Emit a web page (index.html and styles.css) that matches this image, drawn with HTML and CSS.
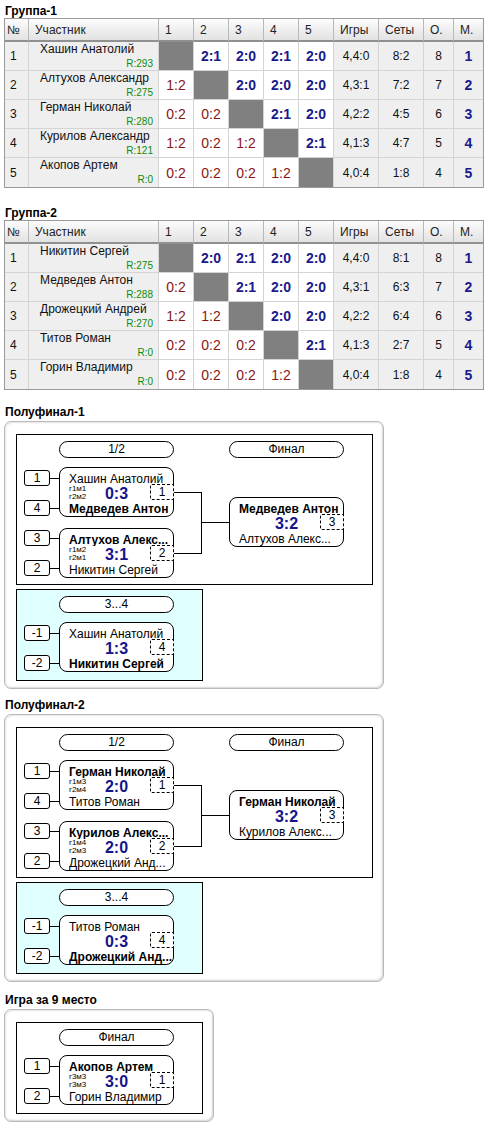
FILE: index.html
```html
<!DOCTYPE html>
<html lang="ru">
<head>
<meta charset="utf-8">
<title>Турнир</title>
<link rel="stylesheet" href="styles.css">
</head>
<body>
<h2 class="ttl">Группа-1</h2>
<table class="grp">
  <thead>
    <tr><th class="c1 hno">№</th><th class="c2">Участник</th><th class="c3">1</th><th class="c3">2</th><th class="c3">3</th><th class="c3">4</th><th class="c3">5</th><th class="c8">Игры</th><th class="c8">Сеты</th><th class="c10">О.</th><th class="c11">М.</th></tr>
  </thead>
  <tbody>
    <tr><td class="no">1</td><td class="nm"><div class="pn">Хашин Анатолий</div><div class="rt">R:293</div></td><td class="x"></td><td class="w">2:1</td><td class="w">2:0</td><td class="w">2:1</td><td class="w">2:0</td><td class="st">4,4:0</td><td class="st">8:2</td><td class="st">8</td><td class="pl">1</td></tr>
    <tr><td class="no">2</td><td class="nm"><div class="pn">Алтухов Александр</div><div class="rt">R:275</div></td><td class="l">1:2</td><td class="x"></td><td class="w">2:0</td><td class="w">2:0</td><td class="w">2:0</td><td class="st">4,3:1</td><td class="st">7:2</td><td class="st">7</td><td class="pl">2</td></tr>
    <tr><td class="no">3</td><td class="nm"><div class="pn">Герман Николай</div><div class="rt">R:280</div></td><td class="l">0:2</td><td class="l">0:2</td><td class="x"></td><td class="w">2:1</td><td class="w">2:0</td><td class="st">4,2:2</td><td class="st">4:5</td><td class="st">6</td><td class="pl">3</td></tr>
    <tr><td class="no">4</td><td class="nm"><div class="pn">Курилов Александр</div><div class="rt">R:121</div></td><td class="l">1:2</td><td class="l">0:2</td><td class="l">1:2</td><td class="x"></td><td class="w">2:1</td><td class="st">4,1:3</td><td class="st">4:7</td><td class="st">5</td><td class="pl">4</td></tr>
    <tr><td class="no">5</td><td class="nm"><div class="pn">Акопов Артем</div><div class="rt">R:0</div></td><td class="l">0:2</td><td class="l">0:2</td><td class="l">0:2</td><td class="l">1:2</td><td class="x"></td><td class="st">4,0:4</td><td class="st">1:8</td><td class="st">4</td><td class="pl">5</td></tr>
  </tbody>
</table>

<h2 class="ttl t-g2">Группа-2</h2>
<table class="grp">
  <thead>
    <tr><th class="c1 hno">№</th><th class="c2">Участник</th><th class="c3">1</th><th class="c3">2</th><th class="c3">3</th><th class="c3">4</th><th class="c3">5</th><th class="c8">Игры</th><th class="c8">Сеты</th><th class="c10">О.</th><th class="c11">М.</th></tr>
  </thead>
  <tbody>
    <tr><td class="no">1</td><td class="nm"><div class="pn">Никитин Сергей</div><div class="rt">R:275</div></td><td class="x"></td><td class="w">2:0</td><td class="w">2:1</td><td class="w">2:0</td><td class="w">2:0</td><td class="st">4,4:0</td><td class="st">8:1</td><td class="st">8</td><td class="pl">1</td></tr>
    <tr><td class="no">2</td><td class="nm"><div class="pn">Медведев Антон</div><div class="rt">R:288</div></td><td class="l">0:2</td><td class="x"></td><td class="w">2:1</td><td class="w">2:0</td><td class="w">2:0</td><td class="st">4,3:1</td><td class="st">6:3</td><td class="st">7</td><td class="pl">2</td></tr>
    <tr><td class="no">3</td><td class="nm"><div class="pn">Дрожецкий Андрей</div><div class="rt">R:270</div></td><td class="l">1:2</td><td class="l">1:2</td><td class="x"></td><td class="w">2:0</td><td class="w">2:0</td><td class="st">4,2:2</td><td class="st">6:4</td><td class="st">6</td><td class="pl">3</td></tr>
    <tr><td class="no">4</td><td class="nm"><div class="pn">Титов Роман</div><div class="rt">R:0</div></td><td class="l">0:2</td><td class="l">0:2</td><td class="l">0:2</td><td class="x"></td><td class="w">2:1</td><td class="st">4,1:3</td><td class="st">2:7</td><td class="st">5</td><td class="pl">4</td></tr>
    <tr><td class="no">5</td><td class="nm"><div class="pn">Горин Владимир</div><div class="rt">R:0</div></td><td class="l">0:2</td><td class="l">0:2</td><td class="l">0:2</td><td class="l">1:2</td><td class="x"></td><td class="st">4,0:4</td><td class="st">1:8</td><td class="st">4</td><td class="pl">5</td></tr>
  </tbody>
</table>

<h2 class="ttl t-s1">Полуфинал-1</h2>
<div class="panel">
  <div class="bracket double">
    <svg class="wires" width="355" height="149" viewBox="0 0 355 149"><path d="M33 43.5H42M33 73.5H42M33 103.5H42M33 133.5H42M157 57.5H184.5V118.5H157M184.5 87.5H212" stroke="#000" stroke-width="1" fill="none" shape-rendering="crispEdges"/></svg>
    <div class="pill r1">1/2</div>
    <div class="pill r2">Финал</div>
    <div class="seed s1">1</div>
    <div class="seed s2">4</div>
    <div class="seed s3">3</div>
    <div class="seed s4">2</div>
    <div class="match m1">
      <div class="n">Хашин Анатолий</div>
      <div class="sc">0:3</div>
      <div class="n b">Медведев Антон</div>
      <div class="tags">г1м1<br>г2м2</div>
      <div class="slot">1</div>
    </div>
    <div class="match m2">
      <div class="n b">Алтухов Алекс...</div>
      <div class="sc">3:1</div>
      <div class="n">Никитин Сергей</div>
      <div class="tags">г1м2<br>г2м1</div>
      <div class="slot">2</div>
    </div>
    <div class="match fin">
      <div class="n b">Медведев Антон</div>
      <div class="sc">3:2</div>
      <div class="n">Алтухов Алекс...</div>
      <div class="slot">3</div>
    </div>
  </div>
  <div class="bracket single cyan">
    <svg class="wires" width="185" height="90" viewBox="0 0 185 90"><path d="M33 43.5H42M33 73.5H42" stroke="#000" stroke-width="1" fill="none" shape-rendering="crispEdges"/></svg>
    <div class="pill r1">3...4</div>
    <div class="seed s1">-1</div>
    <div class="seed s2">-2</div>
    <div class="match m1">
      <div class="n">Хашин Анатолий</div>
      <div class="sc">1:3</div>
      <div class="n b">Никитин Сергей</div>
      <div class="slot">4</div>
    </div>
  </div>
</div>

<h2 class="ttl t-s2">Полуфинал-2</h2>
<div class="panel">
  <div class="bracket double">
    <svg class="wires" width="355" height="149" viewBox="0 0 355 149"><path d="M33 43.5H42M33 73.5H42M33 103.5H42M33 133.5H42M157 57.5H184.5V118.5H157M184.5 87.5H212" stroke="#000" stroke-width="1" fill="none" shape-rendering="crispEdges"/></svg>
    <div class="pill r1">1/2</div>
    <div class="pill r2">Финал</div>
    <div class="seed s1">1</div>
    <div class="seed s2">4</div>
    <div class="seed s3">3</div>
    <div class="seed s4">2</div>
    <div class="match m1">
      <div class="n b">Герман Николай</div>
      <div class="sc">2:0</div>
      <div class="n">Титов Роман</div>
      <div class="tags">г1м3<br>г2м4</div>
      <div class="slot">1</div>
    </div>
    <div class="match m2">
      <div class="n b">Курилов Алекс...</div>
      <div class="sc">2:0</div>
      <div class="n">Дрожецкий Анд...</div>
      <div class="tags">г1м4<br>г2м3</div>
      <div class="slot">2</div>
    </div>
    <div class="match fin">
      <div class="n b">Герман Николай</div>
      <div class="sc">3:2</div>
      <div class="n">Курилов Алекс...</div>
      <div class="slot">3</div>
    </div>
  </div>
  <div class="bracket single cyan">
    <svg class="wires" width="185" height="90" viewBox="0 0 185 90"><path d="M33 43.5H42M33 73.5H42" stroke="#000" stroke-width="1" fill="none" shape-rendering="crispEdges"/></svg>
    <div class="pill r1">3...4</div>
    <div class="seed s1">-1</div>
    <div class="seed s2">-2</div>
    <div class="match m1">
      <div class="n">Титов Роман</div>
      <div class="sc">0:3</div>
      <div class="n b">Дрожецкий Анд...</div>
      <div class="slot">4</div>
    </div>
  </div>
</div>

<h2 class="ttl t-9">Игра за 9 место</h2>
<div class="panel">
  <div class="bracket single">
    <svg class="wires" width="185" height="90" viewBox="0 0 185 90"><path d="M33 43.5H42M33 73.5H42" stroke="#000" stroke-width="1" fill="none" shape-rendering="crispEdges"/></svg>
    <div class="pill r1">Финал</div>
    <div class="seed s1">1</div>
    <div class="seed s2">2</div>
    <div class="match m1">
      <div class="n b">Акопов Артем</div>
      <div class="sc">3:0</div>
      <div class="n">Горин Владимир</div>
      <div class="tags">г3м3<br>г3м3</div>
      <div class="slot">1</div>
    </div>
  </div>
</div>
</body>
</html>
```

FILE: styles.css
```css
* { box-sizing: border-box; }

body {
  margin: 0;
  padding: 4px 0 0 4px;
  font-family: "Liberation Sans", Arial, sans-serif;
  color: #000;
  background: #fff;
}

.ttl {
  margin: 0;
  padding-left: 1px;
  height: 14px;
  font: bold 12px/14px "Liberation Sans", Arial, sans-serif;
  color: #000;
}
.t-g2 { margin-top: 18px; }
.t-s1 { margin-top: 15px; }
.t-s2 { margin-top: 9px; }
.t-9 { margin-top: 11px; }

/* ---------- group tables ---------- */
.grp {
  border-collapse: separate;
  border-spacing: 0;
  table-layout: fixed;
  border: 1px solid #9a9a9a;
  font-family: "Liberation Sans", Arial, sans-serif;
  font-size: 12px;
  color: #111;
}
.grp th {
  height: 23px;
  padding: 0 0 0 6px;
  text-align: left;
  font-weight: normal;
  font-size: 12px;
  color: #222;
  background: linear-gradient(#fcfcfc, #e2e2e2);
  border-right: 1px solid #b9b9b9;
  border-bottom: 2px solid #909090;
  vertical-align: middle;
}
.grp th.hno { padding-left: 2px; }
.grp th:last-child, .grp td:last-child { border-right: 0; }
.grp .c1 { width: 24px; }
.grp .c2 { width: 130px; }
.grp .c3 { width: 35px; }
.grp .c8 { width: 45px; }
.grp .c10 { width: 30px; }
.grp .c11 { width: 29px; }

.grp td {
  height: 29px;
  padding: 0;
  text-align: center;
  vertical-align: middle;
  background: #fff;
  border-right: 1px solid #d4d4d4;
  border-bottom: 1px solid #d4d4d4;
  white-space: nowrap;
}
.grp tbody tr:last-child td { border-bottom: 0; height: 29px; }
.grp td.no { background: #efefef; text-align: left; padding-left: 5px; }
.grp td.nm {
  background: #efefef;
  text-align: left;
  vertical-align: top;
  padding: 0 5px 0 11px;
}
.grp .pn { line-height: 14px; font-size: 12px; color: #111; }
.grp .rt {
  font-size: 10px;
  line-height: 12px;
  padding-top: 2px;
  text-align: right;
  color: #0c8c0c;
}
.grp td.x { background: #808080; }
.grp td.w { color: #1a1a8c; font-weight: bold; font-size: 14px; }
.grp td.l { color: #8b1515; font-size: 14px; }
.grp td.st { background: #efefef; color: #111; }
.grp td.pl { background: #efefef; color: #1a1a8c; font-weight: bold; font-size: 14px; }

/* ---------- bracket panels ---------- */
.panel {
  margin-top: 2px;
  width: fit-content;
  padding: 12px 10px 7px 11px;
  border: 1px solid #b9b9b9;
  border-radius: 7px;
  background: #fff;
  box-shadow: inset 1px 1px 2px #e4e4e4, inset -1px -1px 2px #d4d4d4;
}

.bracket {
  position: relative;
  border: 1px solid #000;
  background: #fff;
  font-family: "Liberation Sans", Arial, sans-serif;
  font-size: 12px;
  color: #000;
}
.bracket.double { width: 357px; height: 151px; }
.bracket.single { width: 187px; height: 92px; }
.bracket.cyan { margin-top: 4px; background: #e0ffff; }

.wires { position: absolute; left: 0; top: 0; }

.pill {
  position: absolute;
  top: 6px;
  width: 115px;
  height: 17px;
  border: 1px solid #000;
  border-radius: 9px;
  background: #fff;
  text-align: center;
  line-height: 15px;
}
.pill.r1 { left: 42px; }
.pill.r2 { left: 212px; }

.seed {
  position: absolute;
  left: 7px;
  width: 26px;
  height: 16px;
  border: 1px solid #000;
  border-radius: 3px;
  background: #fff;
  text-align: center;
  line-height: 14px;
}
.seed.s1 { top: 35px; }
.seed.s2 { top: 65px; }
.seed.s3 { top: 95px; }
.seed.s4 { top: 125px; }

.match {
  position: absolute;
  left: 42px;
  width: 115px;
  height: 50px;
  padding: 5px 0 0 9px;
  border: 1px solid #000;
  border-radius: 8px;
  background: #fff;
}
.match.m1 { top: 32px; }
.match.m2 { top: 93px; }
.match.fin { left: 212px; top: 62px; }

.match .n {
  height: 14px;
  line-height: 14px;
  white-space: nowrap;
  overflow: hidden;
}
.match .n:first-child { height: 12px; line-height: 12px; }
.match .n.b { font-weight: bold; }
.match .sc {
  height: 17px;
  padding-top: 1px;
  margin-left: -9px;
  text-align: center;
  font-weight: bold;
  font-size: 16px;
  line-height: 16px;
  color: #14148c;
}
.match .tags {
  position: absolute;
  left: 9px;
  top: 17px;
  font-size: 8px;
  line-height: 8px;
}
.match .slot {
  position: absolute;
  right: -1px;
  top: 16px;
  width: 24px;
  height: 16px;
  border: 1px dashed #000;
  border-radius: 2px;
  background: #fff;
  text-align: center;
  line-height: 14px;
  font-size: 12px;
}
```
